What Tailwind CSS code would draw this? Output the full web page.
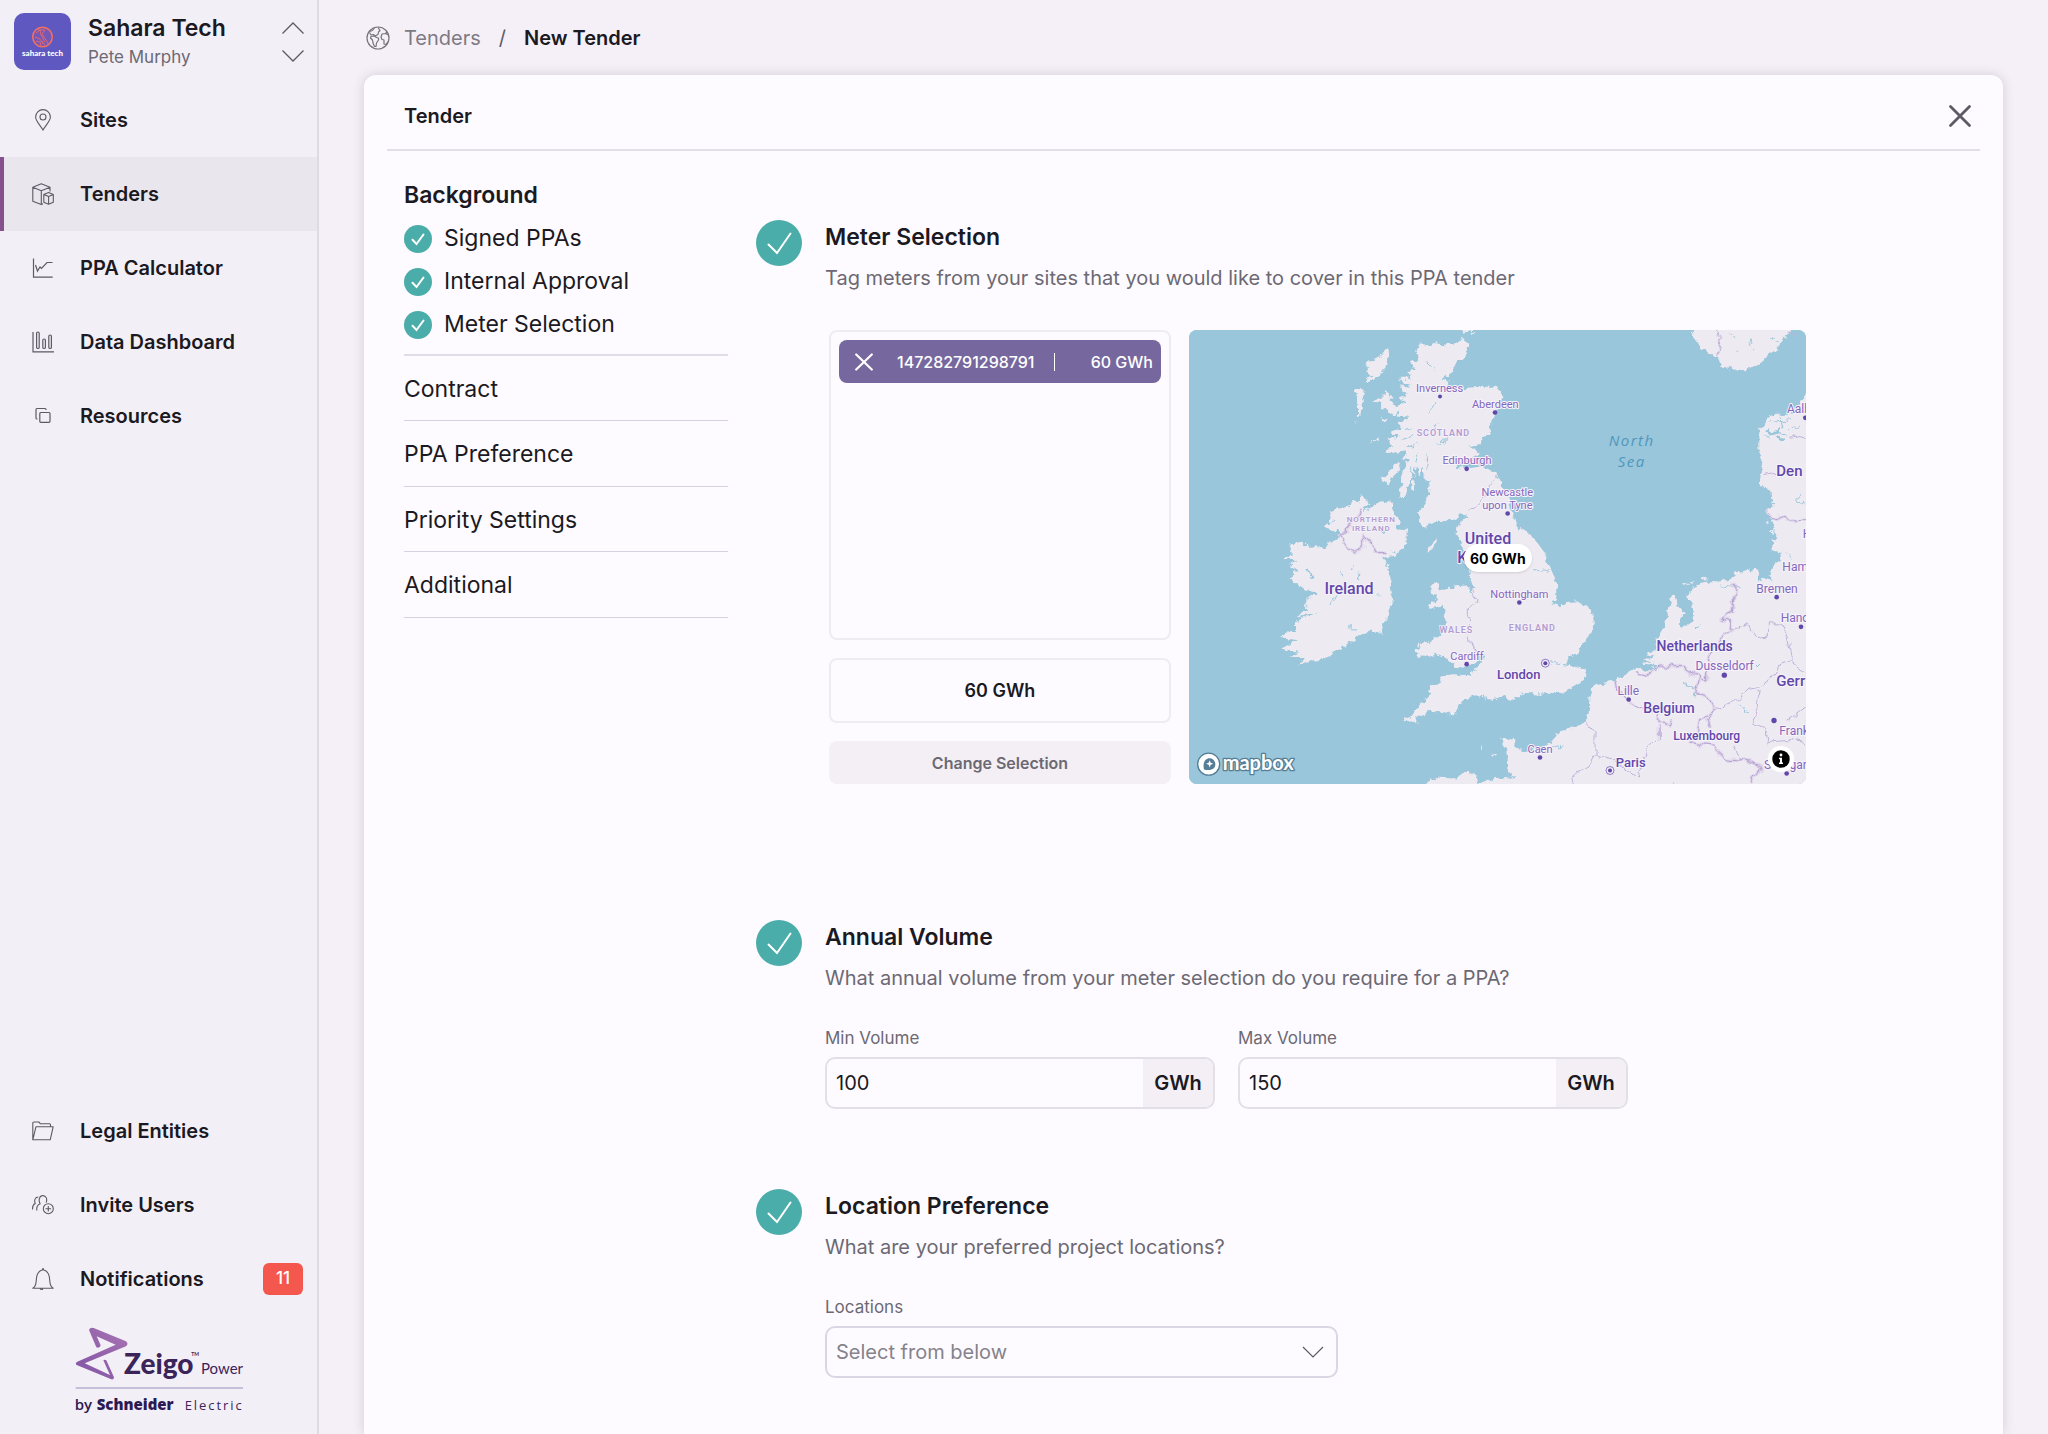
<!DOCTYPE html>
<html lang="en">
<head>
    <meta charset="UTF-8">
    <meta name="viewport" content="width=device-width, initial-scale=1.0">
    <title>New Tender - Zeigo Power</title>
    <script src="https://cdn.jsdelivr.net/npm/@tailwindcss/browser@4"></script>
</head>
<body class="bg-[#f5f0f7] font-['Inter',sans-serif] text-[#1b1921]">
    <div class="flex min-h-screen">
        <!-- Sidebar -->
        <aside class="flex w-[319px] shrink-0 flex-col border-r-2 border-[#dfdbe5] bg-[#f3eff6]">
            <div class="flex h-[83px] items-center pl-3.5 pr-3">
                <svg class="size-[57px] shrink-0 rounded-[10px]" viewBox="0 0 57 57" role="img" aria-label="Sahara Tech logo">
                    <rect width="57" height="57" fill="#5f58c0"/>
                    <circle cx="28.500" cy="24" r="9.800" fill="#7657b4" stroke="#f4705f" stroke-width="1.500"/>
                    <path d="M22 20l4-3 1 5 4 7M24 17l7 0-3 4 6 9M21 24l5 2 3 5M22 28l4 1 1 4M28 28l3 4M33 31h2" fill="none" stroke="#d9697a" stroke-width="1"/>
                    <text x="28.500" y="42.500" text-anchor="middle" class="fill-white font-['Lato',sans-serif] text-[8px] font-black">sahara tech</text>
                </svg>
                <div class="ml-[17px] flex-1">
                    <p class="text-[23px] leading-[30px] font-semibold">Sahara Tech</p>
                    <p class="text-[17px] leading-7 text-[#6c6973]">Pete Murphy</p>
                </div>
                <button type="button" aria-label="Switch company">
                    <svg class="h-10 w-6" viewBox="0 0 24 40" fill="none" stroke="#5d5a64" stroke-width="1.300"><path d="M1.500 11.500L12 1 22.500 11.500M1.500 28.500L12 39 22.500 28.500"/></svg>
                </button>
            </div>

            <!-- Main links -->
            <nav class="text-[20px] font-semibold" aria-label="Main">
                <a href="#" class="flex h-[74px] items-center gap-[26px] pl-8">
                    <svg class="size-[22px]" viewBox="0 0 22 22" fill="none" stroke="#5d5a64" stroke-width="1.100"><path d="M11 21C8.500 16.500 3.600 12 3.600 8a7.400 7.400 0 0 1 14.800 0c0 4-4.900 8.500-7.400 13z"/><circle cx="11" cy="8" r="3"/></svg>
                    Sites
                </a>
                <a href="#" aria-current="page" class="flex h-[74px] items-center gap-[26px] border-l-4 border-[#86508f] bg-[#e9e6ee] pl-7">
                    <svg class="size-[22px]" viewBox="0 0 22 22" fill="none" stroke="#5d5a64" stroke-width="1.100" stroke-linejoin="round"><path d="M18 8.500V4.300L9.300.8.800 4.300v13.900l8.500 3.300 1.700-.7M.8 4.300l8.500 3.500L18 4.300M9.300 7.800v13.700M11.800 11.600l4.800-2 4.700 2v7.600l-4.700 2-4.800-2zM11.800 11.600l4.800 2 4.700-2M16.600 13.600v7.600"/></svg>
                    Tenders
                </a>
                <a href="#" class="flex h-[74px] items-center gap-[26px] pl-8">
                    <svg class="size-[22px]" viewBox="0 0 22 22" fill="none" stroke="#5d5a64" stroke-width="1.200"><path d="M1.500 1.500v18.700h19.200M3.500 8l2 6 2.500-4 1.500 1.500 5.500-6h5.500"/></svg>
                    PPA Calculator
                </a>
                <a href="#" class="flex h-[74px] items-center gap-[26px] pl-8">
                    <svg class="size-[22px]" viewBox="0 0 22 22" fill="none" stroke="#5d5a64" stroke-width="1.200"><path d="M1 1v19.800h21"/><rect x="4.600" y="1" width="2.600" height="16.500" rx="1.300"/><rect x="10.800" y="8" width="2.600" height="9.500" rx="1.300"/><rect x="16.800" y="4" width="2.600" height="13.500" rx="1.300"/></svg>
                    Data Dashboard
                </a>
                <a href="#" class="flex h-[74px] items-center gap-[26px] pl-8">
                    <svg class="size-[22px]" viewBox="0 0 22 22" fill="none" stroke="#5d5a64" stroke-width="1.200"><rect x="7.800" y="7.500" width="10.200" height="9.800" rx="1"/><path d="M14 5V4.500a1 1 0 0 0-1-1H5a1 1 0 0 0-1 1V13a1 1 0 0 0 1 1h.500"/></svg>
                    Resources
                </a>
            </nav>

            <!-- Secondary links -->
            <nav class="mt-auto text-[20px] font-semibold" aria-label="Account">
                <a href="#" class="flex h-[74px] items-center gap-[26px] pl-8">
                    <svg class="size-[22px]" viewBox="0 0 22 22" fill="none" stroke="#5d5a64" stroke-width="1.100" stroke-linejoin="round"><path d="M.8 19.800V3a1 1 0 0 1 1-1h5l1.700 1.800h9a1 1 0 0 1 1 1V6.500M.8 19.800L4 6.700h17.200l-3 13.100z"/></svg>
                    Legal Entities
                </a>
                <a href="#" class="flex h-[74px] items-center gap-[26px] pl-8">
                    <svg class="size-[22px]" viewBox="0 0 22 22" fill="none" stroke="#5d5a64" stroke-width="1.100"><path d="M4.800 16.500c-.4-3.800.6-5.700 3.300-6.700C6.200 6.300 7.300 1.600 10.900 1.600c3.500 0 4.600 3.800 3.200 7M.6 15.500c-.3-3.300.5-5 2.600-6C2 6.500 3 3 6.300 3"/><circle cx="16.300" cy="14.700" r="5"/><path d="M16.300 11.900v5.600M13.500 14.700h5.600"/></svg>
                    Invite Users
                </a>
                <a href="#" class="flex h-[74px] items-center gap-[26px] pl-8 pr-3.5">
                    <svg class="size-[22px]" viewBox="0 0 22 22" fill="none" stroke="#5d5a64" stroke-width="1.100" stroke-linejoin="round"><path d="M.8 20.200c2.700-1.500 3.200-3.200 3.400-7.200C4.500 5.500 6.500 2.700 10.500 2V.8h1V2c4 .7 6 3.500 6.300 11 .2 4 .7 5.700 3.400 7.200zM8 20.300c1 1.900 2.200 1.400 3 .7"/></svg>
                    Notifications
                    <span class="ml-auto flex h-8 w-10 items-center justify-center rounded-md bg-[#f4574d] text-[17px] font-medium text-white">11</span>
                </a>
            </nav>

            <!-- Brand -->
            <div class="h-[118px] pt-2.5 pl-[74px]">
                <svg class="h-22 w-[172px]" viewBox="222 675 516 264" role="img" aria-label="Zeigo Power by Schneider Electric">
                    <defs>
                        <linearGradient id="zeigoMark" x1="0" y1="1" x2="1" y2="0"><stop offset="0" stop-color="#8054a4"/><stop offset="1" stop-color="#a873b2"/></linearGradient>
                    </defs>
                    <path d="M267 687Q270 678 281 681L378 721Q387 728 378 736L254 787 330 822 310 778Q313 774 319 778L342 829Q342 837 334 835L230 792Q224 787 232 782L347 731 290 706 302 733Q300 743 289 739z" fill="url(#zeigoMark)"/>
                    <text x="372" y="818" class="fill-[#3b2459] font-['Lato',sans-serif] text-[84px] font-black">Zeigo</text>
                    <text x="574" y="766" class="fill-[#3b2459] font-['Lato',sans-serif] text-[15px] font-bold">TM</text>
                    <text x="603" y="818" class="fill-[#3b2459] font-['Lato',sans-serif] text-[45px]">Power</text>
                    <path d="M227 861H729" stroke="#9d8fbb" stroke-width="3"/>
                    <text x="224" y="926" class="fill-[#2c1a55] font-['Open_Sans',sans-serif] text-[45px] font-semibold">by</text>
                    <text x="290" y="926" class="fill-[#2c1a55] font-['Open_Sans',sans-serif] text-[45px] font-extrabold">Schneider</text>
                    <text x="554" y="926" class="fill-[#3b2459] font-['Open_Sans',sans-serif] text-[39px] tracking-[0.15em]">Electric</text>
                </svg>
            </div>
        </aside>

        <!-- Page -->
        <main class="flex flex-1 flex-col pl-[45px] pr-[45px]">
            <nav class="flex h-[75px] items-center text-[20px]" aria-label="Breadcrumb">
                <svg class="ml-0.5 size-6" viewBox="0 0 24 24" fill="none" stroke="#76737c" stroke-width="1.200" stroke-linejoin="round"><circle cx="12" cy="12" r="11"/><path d="M8.500 2L6.500 4.500 3.500 5.500M3.500 6.500L5 9l2.500-.5L9 10l3-1.500.5-2.500L14 4.500l-2-3M5 10.500l3.500-.5 2 1.500 2 .5v2l-2 3-.5 3.500h-1.500L7 17l-.5-3-2-2zM22.500 9l-3-1.500-3.500.5-1 3 1 2.500 2 .5v4l2 .5 2-3M19.500 7.500l1.500-1.500"/></svg>
                <a href="#" class="ml-3.5 text-[#7d7a83]">Tenders</a>
                <span class="mx-[18px] text-[#5d5a64]">/</span>
                <span class="font-semibold">New Tender</span>
            </nav>

            <div class="flex-1 rounded-t-xl bg-[#fdfbff] pb-14 shadow-[0_0_12px_rgba(60,40,80,0.18)]">
                <header class="mx-[23px] flex h-[76px] items-center justify-between border-b-2 border-[#e2dfe6] pt-2 pl-[17px] pr-2">
                    <h1 class="text-[20px] font-semibold">Tender</h1>
                    <button type="button" aria-label="Close">
                        <svg class="size-6" viewBox="0 0 24 24" fill="none" stroke="#5d5a64" stroke-width="2.800" stroke-linecap="round"><path d="M2.500 2.500l19 19M21.500 2.500l-19 19"/></svg>
                    </button>
                </header>

                <div class="flex pt-[23px] pl-10 pr-10">
                    <!-- Steps -->
                    <nav class="w-[324px] shrink-0 text-[23px]" aria-label="Steps">
                        <div class="border-b-2 border-[#e0dde8] pb-2">
                            <h2 class="flex h-[43px] items-center font-semibold">Background</h2>
                            <a href="#" class="flex h-[43px] items-center gap-3">
                                <svg class="size-7" viewBox="0 0 28 28"><circle cx="14" cy="14" r="14" fill="#4bada9"/><path d="M8.500 14.800l4 4.200 7-9.500" fill="none" stroke="#fff" stroke-width="2" stroke-linecap="round"/></svg>
                                Signed PPAs
                            </a>
                            <a href="#" class="flex h-[43px] items-center gap-3">
                                <svg class="size-7" viewBox="0 0 28 28"><circle cx="14" cy="14" r="14" fill="#4bada9"/><path d="M8.500 14.800l4 4.200 7-9.500" fill="none" stroke="#fff" stroke-width="2" stroke-linecap="round"/></svg>
                                Internal Approval
                            </a>
                            <a href="#" class="flex h-[43px] items-center gap-3">
                                <svg class="size-7" viewBox="0 0 28 28"><circle cx="14" cy="14" r="14" fill="#4bada9"/><path d="M8.500 14.800l4 4.200 7-9.500" fill="none" stroke="#fff" stroke-width="2" stroke-linecap="round"/></svg>
                                Meter Selection
                            </a>
                        </div>
                        <a href="#" class="flex h-[65px] items-center border-b border-[#d6d2e2] pt-0.5">Contract</a>
                        <a href="#" class="flex h-[66px] items-center border-b border-[#d6d2e2] pt-0.5">PPA Preference</a>
                        <a href="#" class="flex h-[65px] items-center border-b border-[#d6d2e2] pt-0.5">Priority Settings</a>
                        <a href="#" class="flex h-[66px] items-center border-b border-[#d6d2e2] pt-0.5">Additional</a>
                    </nav>

                    <div class="ml-7 flex-1 pt-[46px]">
                        <!-- Meter selection -->
                        <section class="flex gap-[23px]">
                            <svg class="size-[46px] shrink-0" viewBox="0 0 46 46"><circle cx="23" cy="23" r="23" fill="#4bada9"/><path d="M12.500 24.500l8.500 8.500L34.500 13.500" fill="none" stroke="#fff" stroke-width="2" stroke-linecap="round"/></svg>
                            <div class="flex-1">
                                <h2 class="text-[23px] leading-[34px] font-semibold">Meter Selection</h2>
                                <p class="mt-2.5 text-[20px] leading-7 text-[#6c6973]">Tag meters from your sites that you would like to cover in this PPA tender</p>
                                <div class="mt-[38px] flex gap-[18px] pl-1">
                                    <div class="flex w-[342px] shrink-0 flex-col gap-[18px]">
                                        <div class="h-[310px] rounded-lg border-2 border-[#eeebf1] p-2">
                                            <div class="flex h-[43px] items-center rounded-lg bg-[#76689e] pl-4 pr-2 text-[16px] font-medium text-white">
                                                <button type="button" aria-label="Remove meter">
                                                    <svg class="size-[18px]" viewBox="0 0 18 18" fill="none" stroke="#fff" stroke-width="2.200" stroke-linecap="round"><path d="M1.200 1.500l15.600 15M16.800 1.500l-15.600 15"/></svg>
                                                </button>
                                                <span class="ml-6">147282791298791</span>
                                                <span class="ml-5 h-[18px] w-px bg-white"></span>
                                                <span class="ml-auto">60 GWh</span>
                                            </div>
                                        </div>
                                        <p class="flex h-[65px] items-center justify-center rounded-lg border-2 border-[#eeebf1] text-[18px] font-semibold">60 GWh</p>
                                        <button type="button" class="h-[43px] rounded-lg bg-[#f3eff5] text-[16px] font-semibold text-[#6c6973]">Change Selection</button>
                                    </div>

                                    <!-- Map -->
                                    <div class="relative h-[454px] max-w-[617px] flex-1 overflow-hidden rounded-lg bg-[#99c6da]">
                                        <svg class="h-full w-full" viewBox="27 30 1851 1365" preserveAspectRatio="xMidYMid slice" role="img" aria-label="Map of meters">
                                            <defs>
                                                <filter id="coast" x="0" y="0" width="1" height="1">
                                                    <feTurbulence type="fractalNoise" baseFrequency="0.05" numOctaves="3" seed="4"/>
                                                    <feDisplacementMap in="SourceGraphic" scale="26" xChannelSelector="R" yChannelSelector="G"/>
                                                </filter>
                                                <filter id="frontier" x="0" y="0" width="1" height="1">
                                                    <feTurbulence type="fractalNoise" baseFrequency="0.03" numOctaves="2" seed="9"/>
                                                    <feDisplacementMap in="SourceGraphic" scale="30" xChannelSelector="R" yChannelSelector="G"/>
                                                </filter>
                                            </defs>
                                            <g filter="url(#coast)">
                                                <rect x="-40" y="-40" width="1980" height="1500" fill="#99c6da"/>
                                                <g fill="#eeeaf2">
                                                    <!-- Great Britain -->
                                                    <path d="M720 68L735 78 760 70 800 76 845 62 868 66 866 90 845 120 825 138 805 165 785 180 805 184 800 200 845 206 900 202 955 202 965 215 967 235 945 285 935 305 930 340 910 360 895 375 862 386 890 388 900 402 870 415 842 424 820 442 870 446 900 440 935 450 950 462 970 500 985 540 1000 590 1015 625 1050 640 1080 680 1095 700 1092 712 1110 740 1132 800 1132 830 1115 850 1140 865 1145 848 1190 845 1225 860 1241 885 1241 915 1225 950 1205 975 1200 990 1170 1015 1155 1035 1180 1042 1217 1050 1215 1075 1180 1100 1140 1120 1080 1122 1020 1120 1015 1135 995 1142 970 1127 940 1135 955 1142 915 1137 885 1130 850 1142 832 1155 825 1188 790 1175 745 1175 710 1195 708 1215 690 1205 668 1210 672 1197 695 1190 715 1160 750 1125 755 1095 775 1092 785 1070 820 1067 870 1070 880 1050 915 1012 918 1000 895 1018 870 1037 840 1045 812 1032 800 1015 770 1002 745 1014 715 1015 718 1000 700 985 735 975 765 955 795 930 792 890 788 862 745 865 770 835 752 815 750 798 765 788 782 810 830 800 862 798 870 815 890 810 868 785 872 760 865 735 850 690 830 645 840 610 865 588 832 584 825 600 800 604 760 612 735 622 722 612 708 582 720 575 730 560 748 515 745 490 730 470 728 448 715 470 708 440 700 475 695 440 688 490 675 532 660 535 662 500 672 450 686 415 664 420 680 395 650 400 618 400 615 388 640 385 622 358 660 355 628 340 668 325 652 310 690 295 648 290 660 272 640 268 672 245 655 235 680 222 658 200 690 205 657 178 692 178 685 155 708 150 690 128 718 120 708 95z"/>
                                                    <!-- Ireland -->
                                                    <path d="M428 620L460 600 450 578 505 560 510 545 540 548 540 530 568 545 548 575 600 548 635 550 645 590 660 605 650 625 680 630 680 665 660 690 640 698 648 708 612 715 622 750 632 770 628 800 638 845 625 890 608 925 615 942 580 937 545 945 510 975 470 990 430 1018 350 1037 378 1012 325 1015 355 1000 303 988 350 962 298 952 310 940 345 937 345 905 420 880 345 895 378 868 380 838 412 820 372 810 345 790 320 775 352 755 330 740 355 725 315 715 335 700 328 675 370 670 385 685 440 682 475 655 490 640 440 628z"/>
                                                    <!-- Continent -->
                                                    <path d="M735 1394L780 1372 830 1374 860 1355 880 1362 895 1390 930 1382 950 1375 998 1378 985 1335 978 1290 960 1255 1005 1258 1008 1288 1060 1297 1115 1272 1125 1245 1190 1220 1225 1195 1230 1105 1260 1095 1305 1085 1365 1048 1405 1055 1440 1040 1380 1035 1425 1030 1385 1022 1420 1010 1400 1000 1430 990 1425 975 1455 915 1470 840 1482 822 1492 845 1488 862 1515 880 1500 900 1500 930 1530 912 1545 890 1540 870 1525 835 1530 805 1580 785 1650 785 1665 760 1710 750 1735 758 1738 790 1750 770 1770 785 1775 745 1805 725 1800 700 1778 690 1775 665 1795 650 1785 625 1775 600 1760 570 1780 560 1775 520 1738 495 1750 430 1738 400 1738 330 1762 298 1790 283 1850 283 1858 250 1890 215H1940V1440H735z"/>
                                                    <!-- Norway -->
                                                    <path d="M1535 0L1540 50 1560 80 1610 115 1625 140 1660 150 1700 152 1740 130 1780 95 1820 55 1845 0z"/>
                                                    <!-- Islands -->
                                                    <path d="M625 84L628 118 612 150 590 175 570 190 558 182 580 168 555 152 565 130 590 120zM525 208L555 210 545 235 546 285 534 285 534 232zM620 205L632 235 645 255 662 270 640 285 605 260 585 240 612 232zM520 305L532 300 526 310zM608 295L622 298 618 308zM570 372L600 352 590 364zM660 425L655 455 635 480 622 495 605 480 625 462 640 440zM695 482L708 490 708 515 693 510zM768 658L765 680 745 700 742 690zM848 20L882 20 878 44 868 35 852 40zM905 1278L912 1280 908 1284zM935 1305L948 1310 942 1316zM1510 795L1540 785 1538 790 1510 800zM1560 780L1590 776 1570 784zM1755 605L1762 600 1762 620zM1770 640L1785 630 1782 646z"/>
                                                </g>
                                                <!-- Lochs, lakes and fjords -->
                                                <g fill="none" stroke="#99c6da" stroke-width="3">
                                                    <path d="M770 245L745 280M740 130L765 152M775 310L760 330M800 360L775 375M700 345L665 360M720 370L680 385M690 325L672 330M715 405L700 425M740 400L745 450M485 755L492 780M465 830L450 860M500 925H535M1060 750L1090 755 1105 750M1110 1030L1180 1040M1540 930L1560 912M1620 800L1685 805M1515 1095L1540 1105 1545 1130M1675 1150L1700 1180M1475 1385H1480M1730 1035H1742M1105 1295L1120 1285 1150 1280M1820 700L1835 720M1655 45L1665 58M1668 90L1670 98M1710 60L1715 78M1715 92V98M1780 60L1795 65M1760 350L1800 340 1815 350M1770 310L1830 300M1800 290L1810 330M1830 330L1860 320M1865 520L1850 540 1880 560"/>
                                                    <path d="M605 625L618 630 612 640zM520 740V748M535 760V780M385 750L395 775M598 825V828" stroke-width="6"/>
                                                    <path d="M1760 330L1780 345 1800 325M1790 350L1810 365" stroke-width="9"/>
                                                </g>
                                            </g>

                                            <!-- Borders -->
                                            <g filter="url(#frontier)" fill="none" stroke-linejoin="round">
                                                <rect x="-40" y="-40" width="1980" height="1500"/>
                                                <path d="M545 570L525 600 505 625 475 652 495 678 520 695 540 693 560 658 580 672 590 700 620 698M1305 1085L1310 1110 1335 1130 1365 1155 1430 1175 1435 1210 1470 1220 1480 1200M1370 1050L1375 1065 1400 1070 1440 1040 1500 1038 1540 1068 1562 1075 1550 1120 1585 1130 1605 1170 1560 1200 1550 1240 1530 1270 1600 1280 1640 1318 1700 1325 1745 1340 1710 1395M1605 1175L1580 1200 1585 1230M1562 1075L1580 1085 1580 1010 1630 950 1660 930 1650 905 1625 900 1660 880 1668 800 1655 792M1762 570L1778 590 1830 605 1875 602" stroke="#e0d7eb" stroke-width="10"/>
                                                <path d="M545 570L525 600 505 625 475 652 495 678 520 695 540 693 560 658 580 672 590 700 620 698M1305 1085L1310 1110 1335 1130 1365 1155 1430 1175 1435 1210 1470 1220 1480 1200M1370 1050L1375 1065 1400 1070 1440 1040 1500 1038 1540 1068 1562 1075 1550 1120 1585 1130 1605 1170 1560 1200 1550 1240 1530 1270 1600 1280 1640 1318 1700 1325 1745 1340 1710 1395M1605 1175L1580 1200 1585 1230M1562 1075L1580 1085 1580 1010 1630 950 1660 930 1650 905 1625 900 1660 880 1668 800 1655 792M1762 570L1778 590 1830 605 1875 602" stroke="#b5a2d1" stroke-width="3"/>
                                                <path d="M950 468L930 495 910 540 868 575M865 798L880 825 895 845 865 865 865 890 873 900 860 935 870 980 900 1000M1218 1208L1245 1240 1245 1310 1220 1350 1175 1370 1180 1395M1245 1310L1300 1320 1375 1375 1380 1330 1400 1295 1435 1260 1435 1220M1660 930L1700 915 1725 955 1765 950 1765 910 1800 910 1825 950 1838 1020 1790 1040 1770 1080 1735 1105 1710 1110 1660 1145 1605 1175M1738 1110L1730 1170 1715 1210 1755 1225 1765 1270 1830 1260 1878 1270M1838 1025L1878 1055M1878 1165L1820 1205M1665 1270L1675 1300 1685 1330M1745 465L1780 460 1800 470M1830 350L1860 345 1878 360M1612 30L1622 70 1610 110M1820 35L1840 45" stroke="#c0b1d8" stroke-width="3"/>
                                            </g>

                                            <!-- Towns -->
                                            <g fill="#6247aa">
                                                <circle cx="780" cy="231" r="6"/><circle cx="945" cy="279" r="7"/><circle cx="860" cy="448" r="7"/><circle cx="983" cy="582" r="7"/><circle cx="1018" cy="849" r="7"/><circle cx="860" cy="1034" r="7"/><circle cx="1346" cy="1140" r="7"/><circle cx="1633" cy="1067" r="8"/><circle cx="1790" cy="833" r="7"/><circle cx="1863" cy="922" r="7"/><circle cx="1782" cy="1203" r="8"/><circle cx="1080" cy="1314" r="7"/><circle cx="1820" cy="1362" r="7"/><circle cx="1876" cy="295" r="7"/>
                                                <circle cx="1096" cy="1031" r="6"/><circle cx="1290" cy="1353" r="6"/>
                                                <g fill="none" stroke="#6247aa" stroke-width="2"><circle cx="1096" cy="1031" r="12"/><circle cx="1290" cy="1353" r="12"/></g>
                                            </g>

                                            <g class="fill-[#8467bd] stroke-[#f6f3f9] stroke-[6px] font-['Roboto',sans-serif] text-[36px] [paint-order:stroke]" text-anchor="middle" stroke-linejoin="round">
                                                <text x="779" y="218" class="text-[33px]">Inverness</text>
                                                <text x="946" y="266" class="text-[33px]">Aberdeen</text>
                                                <text x="861" y="434" class="text-[33px]">Edinburgh</text>
                                                <text x="982" y="528" class="text-[33px]">Newcastle</text>
                                                <text x="982" y="567" class="text-[33px]">upon Tyne</text>
                                                <text x="1018" y="835" class="text-[33px]">Nottingham</text>
                                                <text x="861" y="1020" class="text-[33px]">Cardiff</text>
                                                <text x="1345" y="1125">Lille</text>
                                                <text x="1634" y="1050">Dusseldorf</text>
                                                <text x="1791" y="820">Bremen</text>
                                                <text x="1080" y="1300" class="text-[33px]">Caen</text>
                                                <text x="1821" y="280" text-anchor="start">Aalb</text>
                                                <text x="1807" y="755" text-anchor="start">Ham</text>
                                                <text x="1802" y="908" text-anchor="start">Hano</text>
                                                <text x="1868" y="655" text-anchor="start">H</text>
                                                <text x="1798" y="1246" text-anchor="start">Frank</text>
                                                <text x="1752" y="1348" text-anchor="start">Stuttgar</text>
                                            </g>
                                            <g class="fill-[#6247aa] stroke-[#f6f3f9] stroke-[6px] font-['Roboto',sans-serif] text-[42px] font-medium [paint-order:stroke]" text-anchor="middle" stroke-linejoin="round">
                                                <text x="507" y="822" class="text-[48px]">Ireland</text>
                                                <text x="924" y="672" class="text-[48px]">United</text>
                                                <text x="832" y="730" class="text-[48px]" text-anchor="start">K</text>
                                                <text x="1789" y="468" class="text-[45px]" text-anchor="start">Den</text>
                                                <text x="1789" y="1099" class="text-[45px]" text-anchor="start">Gerr</text>
                                                <text x="1016" y="1078" class="text-[39px]">London</text>
                                                <text x="1544" y="993">Netherlands</text>
                                                <text x="1467" y="1181">Belgium</text>
                                                <text x="1580" y="1260" class="text-[36px]">Luxembourg</text>
                                                <text x="1352" y="1343" class="text-[39px]">Paris</text>
                                            </g>
                                            <g class="fill-[#b09bd2] stroke-[#f6f3f9] stroke-[4px] font-['Roboto',sans-serif] text-[27px] font-semibold tracking-widest [paint-order:stroke]" text-anchor="middle">
                                                <text x="790" y="350">SCOTLAND</text>
                                                <text x="574" y="607" class="text-[24px]">NORTHERN</text>
                                                <text x="574" y="635" class="text-[24px]">IRELAND</text>
                                                <text x="829" y="940">WALES</text>
                                                <text x="1057" y="933">ENGLAND</text>
                                            </g>
                                            <g class="fill-[#4f97bd] font-['Open_Sans',sans-serif] text-[45px] italic tracking-widest" text-anchor="middle">
                                                <text x="1355" y="380">North</text>
                                                <text x="1355" y="443">Sea</text>
                                            </g>

                                            <!-- Map provider -->
                                            <circle cx="86" cy="1334" r="33" fill="#fff" stroke="#557e96" stroke-width="4"/>
                                            <path d="M72 1350C68 1335 72 1316 90 1316A18 18 0 0 1 106 1334C106 1351 88 1354 72 1350z" fill="#557e96"/>
                                            <path d="M89 1322L92 1330 100 1333 92 1336 89 1344 86 1336 78 1333 86 1330z" fill="#fff"/>
                                            <text x="128" y="1350" class="fill-white stroke-[#557e96] stroke-[8px] font-['Lato',sans-serif] text-[60px] font-bold [paint-order:stroke]" stroke-linejoin="round">mapbox</text>
                                        </svg>
                                        <button type="button" class="absolute top-[214px] left-[275px] h-7 rounded-full bg-white px-1.5 text-[14px] font-bold text-black shadow">60 GWh</button>
                                        <button type="button" aria-label="Map attribution" class="absolute right-3 bottom-3 rounded-full bg-white p-1">
                                            <svg class="size-[18px]" viewBox="0 0 18 18"><circle cx="9" cy="9" r="8.700"/><circle cx="9" cy="5" r="1.400" fill="#fff"/><path d="M7 7.700h3v4.800h1V14H7v-1.500h1V9.200H7z" fill="#fff"/></svg>
                                        </button>
                                    </div>
                                </div>
                            </div>
                        </section>

                        <!-- Annual volume -->
                        <section class="mt-[136px] flex gap-[23px]">
                            <svg class="size-[46px] shrink-0" viewBox="0 0 46 46"><circle cx="23" cy="23" r="23" fill="#4bada9"/><path d="M12.500 24.500l8.500 8.500L34.500 13.500" fill="none" stroke="#fff" stroke-width="2" stroke-linecap="round"/></svg>
                            <div class="flex-1">
                                <h2 class="text-[23px] leading-[34px] font-semibold">Annual Volume</h2>
                                <p class="mt-2.5 text-[20px] leading-7 text-[#6c6973]">What annual volume from your meter selection do you require for a PPA?</p>
                                <div class="mt-[34px] flex gap-[23px]">
                                    <div class="w-[390px]">
                                        <label for="minVolume" class="block text-[17px] leading-6 text-[#6c6973]">Min Volume</label>
                                        <div class="mt-[7px] flex h-[52px] overflow-hidden rounded-[10px] border-2 border-[#e2dfe6] text-[20px]">
                                            <input type="text" id="minVolume" name="minVolume" value="100" class="min-w-0 flex-1 pl-[9px] outline-none">
                                            <span class="flex w-[70px] items-center justify-center bg-[#f3eff5] font-semibold">GWh</span>
                                        </div>
                                    </div>
                                    <div class="w-[390px]">
                                        <label for="maxVolume" class="block text-[17px] leading-6 text-[#6c6973]">Max Volume</label>
                                        <div class="mt-[7px] flex h-[52px] overflow-hidden rounded-[10px] border-2 border-[#e2dfe6] text-[20px]">
                                            <input type="text" id="maxVolume" name="maxVolume" value="150" class="min-w-0 flex-1 pl-[9px] outline-none">
                                            <span class="flex w-[70px] items-center justify-center bg-[#f3eff5] font-semibold">GWh</span>
                                        </div>
                                    </div>
                                </div>
                            </div>
                        </section>

                        <!-- Location preference -->
                        <section class="mt-20 flex gap-[23px]">
                            <svg class="size-[46px] shrink-0" viewBox="0 0 46 46"><circle cx="23" cy="23" r="23" fill="#4bada9"/><path d="M12.500 24.500l8.500 8.500L34.500 13.500" fill="none" stroke="#fff" stroke-width="2" stroke-linecap="round"/></svg>
                            <div class="flex-1">
                                <h2 class="text-[23px] leading-[34px] font-semibold">Location Preference</h2>
                                <p class="mt-2.5 text-[20px] leading-7 text-[#6c6973]">What are your preferred project locations?</p>
                                <label for="locations" class="mt-[34px] block text-[17px] leading-6 text-[#6c6973]">Locations</label>
                                <div class="relative mt-[7px] w-[513px]">
                                    <select id="locations" name="locations" class="h-[52px] w-full appearance-none rounded-[10px] border-2 border-[#dad7e4] pl-[9px] text-[20px] text-[#85828b]">
                                        <option value="">Select from below</option>
                                    </select>
                                    <svg class="pointer-events-none absolute top-5 right-3.5 h-3 w-[22px]" viewBox="0 0 22 12" fill="none" stroke="#5d5a64" stroke-width="1.200"><path d="M1 1l10 10L21 1"/></svg>
                                </div>
                            </div>
                        </section>
                    </div>
                </div>
            </div>
        </main>
    </div>
</body>
</html>
